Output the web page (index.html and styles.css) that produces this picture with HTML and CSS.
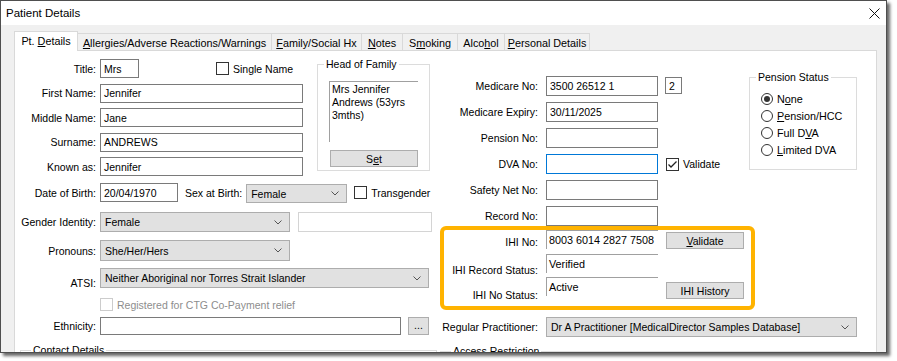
FILE: index.html
```html
<!DOCTYPE html>
<html>
<head>
<meta charset="utf-8">
<title>Patient Details</title>
<link rel="stylesheet" href="styles.css">
</head>
<body>
<div class="window">
  <div class="titlebar">
    <span class="title">Patient Details</span>
    <svg class="close" width="11" height="11" viewBox="0 0 11 11"><path d="M0.5 0.5 L10.5 10.5 M10.5 0.5 L0.5 10.5" stroke="#111" stroke-width="1" fill="none"/></svg>
  </div>
  <div class="client">
    <div class="tabs">
      <div class="tab active t-pt"><span>Pt. <u>D</u>etails</span></div>
      <div class="tab t-all"><span><u>A</u>llergies/Adverse Reactions/Warnings</span></div>
      <div class="tab t-fam"><span><u>F</u>amily/Social Hx</span></div>
      <div class="tab t-notes"><span><u>N</u>otes</span></div>
      <div class="tab t-smk"><span>S<u>m</u>oking</span></div>
      <div class="tab t-alc"><span>Alco<u>h</u>ol</span></div>
      <div class="tab t-per"><span><u>P</u>ersonal Details</span></div>
    </div>
    <div class="panel">
      <div class="col-left">
        <div class="upper-left">
          <div class="names">
            <div class="frow h19"><span class="lbl">Title:</span><div class="inp w39">Mrs</div><span class="cb ml77"></span><span class="cbl">Single Name</span></div>
            <div class="frow h19"><span class="lbl">First Name:</span><div class="inp w203">Jennifer</div></div>
            <div class="frow h19"><span class="lbl">Middle Name:</span><div class="inp w203">Jane</div></div>
            <div class="frow h19"><span class="lbl">Surname:</span><div class="inp w203">ANDREWS</div></div>
            <div class="frow h19"><span class="lbl">Known as:</span><div class="inp w203">Jennifer</div></div>
          </div>
          <fieldset class="grp hof">
            <legend class="cap">Head of Family</legend>
            <div class="hof-box">Mrs Jennifer<br>Andrews (53yrs<br>3mths)</div>
            <div class="btn set"><span>S<u>e</u>t</span></div>
          </fieldset>
        </div>

        <div class="frow h19 r-dob">
          <span class="lbl">Date of Birth:</span><div class="inp w78">20/04/1970</div>
          <span class="sexlbl">Sex at Birth:</span>
          <div class="sel w101">Female<svg class="chev" width="8" height="5" viewBox="0 0 8 5"><polyline points="0.5,0.5 4,4 7.5,0.5" fill="none" stroke="#555" stroke-width="1"/></svg></div>
          <span class="cb ml7"></span><span class="cbl">Transgender</span>
        </div>

        <div class="frow h20 r-gen">
          <span class="lbl">Gender Identity:</span>
          <div class="sel w190">Female<svg class="chev" width="8" height="5" viewBox="0 0 8 5"><polyline points="0.5,0.5 4,4 7.5,0.5" fill="none" stroke="#555" stroke-width="1"/></svg></div>
          <div class="inp dis w134"></div>
        </div>

        <div class="frow h21 r-pro">
          <span class="lbl">Pronouns:</span>
          <div class="sel w190">She/Her/Hers<svg class="chev" width="8" height="5" viewBox="0 0 8 5"><polyline points="0.5,0.5 4,4 7.5,0.5" fill="none" stroke="#555" stroke-width="1"/></svg></div>
        </div>

        <div class="frow h20 r-atsi">
          <span class="lbl low">ATSI:</span>
          <div class="sel w329">Neither Aboriginal nor Torres Strait Islander<svg class="chev" width="8" height="5" viewBox="0 0 8 5"><polyline points="0.5,0.5 4,4 7.5,0.5" fill="none" stroke="#555" stroke-width="1"/></svg></div>
        </div>

        <div class="frow h13 r-ctg">
          <span class="lbl"></span><span class="cb cb-dis"></span><span class="cbl dis-text">Registered for CTG Co-Payment relief</span>
        </div>

        <div class="frow h18 r-eth">
          <span class="lbl">Ethnicity:</span><div class="inp w301"></div><div class="btn dots">...</div>
        </div>

        <fieldset class="grp contact">
          <legend class="cap">Contact Details</legend>
          <div class="grp-fill"></div>
        </fieldset>
      </div>

      <div class="col-right">
        <div class="upper-right">
          <div class="mrows">
            <div class="frow h20"><span class="rlbl">Medicare No:</span><div class="inp w112">3500 26512 1</div><div class="inp irn">2</div></div>
            <div class="frow h20"><span class="rlbl">Medicare Expiry:</span><div class="inp w112">30/11/2025</div></div>
            <div class="frow h20"><span class="rlbl">Pension No:</span><div class="inp w112"></div></div>
            <div class="frow h20"><span class="rlbl">DVA No:</span><div class="inp w112 focus"></div><span class="cb ml8 checked"><svg width="11" height="11" viewBox="0 0 11 11"><polyline points="1.5,5.5 4,8 9.5,2.5" fill="none" stroke="#222" stroke-width="1.3"/></svg></span><span class="cbl">Validate</span></div>
            <div class="frow h20"><span class="rlbl">Safety Net No:</span><div class="inp w112"></div></div>
            <div class="frow h20"><span class="rlbl">Record No:</span><div class="inp w112"></div></div>
          </div>
          <fieldset class="grp pension">
            <legend class="cap">Pension Status</legend>
            <div class="radios">
              <div class="rrow"><span class="rb on"><span class="dot"></span></span><span class="rl">N<u>o</u>ne</span></div>
              <div class="rrow"><span class="rb"></span><span class="rl"><u>P</u>ension/HCC</span></div>
              <div class="rrow"><span class="rb"></span><span class="rl">Full D<u>V</u>A</span></div>
              <div class="rrow"><span class="rb"></span><span class="rl"><u>L</u>imited DVA</span></div>
            </div>
          </fieldset>
        </div>

        <div class="ihi">
          <span class="ilbl l1">IHI No:</span>
          <div class="ro">8003 6014 2827 7508</div>
          <div class="btn ib1"><span><u>V</u>alidate</span></div>
          <span class="ilbl l2">IHI Record Status:</span>
          <div class="ro">Verified</div>
          <span></span>
          <span class="ilbl l3">IHI No Status:</span>
          <div class="ro">Active</div>
          <div class="btn ib3"><span>IHI History</span></div>
        </div>

        <div class="frow h20 r-prac">
          <span class="rlbl">Regular Practitioner:</span>
          <div class="sel w311">Dr A Practitioner [MedicalDirector Samples Database]<svg class="chev" width="8" height="5" viewBox="0 0 8 5"><polyline points="0.5,0.5 4,4 7.5,0.5" fill="none" stroke="#555" stroke-width="1"/></svg></div>
        </div>

        <fieldset class="grp access">
          <legend class="cap">Access Restriction</legend>
          <div class="grp-fill"></div>
        </fieldset>
      </div>
    </div>
  </div>
</div>
</body>
</html>
```
FILE: styles.css
```css
* { box-sizing: border-box; }
html, body { margin: 0; padding: 0; background: #ffffff; }
body {
  font-family: "Liberation Sans", Arial, sans-serif;
  font-size: 10.5px;
  color: #000;
  width: 897px;
  height: 361px;
  overflow: hidden;
}
u { text-decoration: underline; text-underline-offset: 1px; }

.window {
  width: 887px;
  height: 353px;
  border: 1px solid #4f4f4f;
  background: #f0f0f0;
  overflow: hidden;
  box-shadow: 3px 3px 3px rgba(0, 0, 0, 0.6);
}

.titlebar {
  height: 24px;
  background: #fff;
  display: flex;
  align-items: center;
  justify-content: space-between;
  padding: 0 6px 0 5px;
}
.title { font-size: 11.5px; }
.close { display: block; margin-top: 1px; }

.client {
  padding: 6px 0 0 13px;
}

.tabs {
  display: flex;
  align-items: flex-end;
  height: 19px;
}
.tab {
  height: 17px;
  border: 1px solid #d9d9d9;
  border-left: none;
  border-bottom: none;
  background: #f0f0f0;
  display: flex;
  align-items: center;
  justify-content: center;
  white-space: nowrap;
  font-size: 10.8px;
  padding-top: 1px;
}
.tab.active {
  height: 20px;
  border-left: 1px solid #d9d9d9;
  background: #fff;
  margin-bottom: -1px;
  position: relative;
  z-index: 1;
  padding-top: 0;
  padding-bottom: 1px;
}
.t-pt { width: 64px; }
.t-all { width: 194px; }
.t-fam { width: 90px; }
.t-notes { width: 41px; }
.t-smk { width: 55px; }
.t-alc { width: 47px; }
.t-per { width: 85px; }

.panel {
  width: 863px;
  height: 320px;
  background: #fff;
  border: 1px solid #d9d9d9;
  display: flex;
}

/* generic */
.frow { display: flex; align-items: center; }
.h13 { height: 13px; }
.h18 { height: 18px; }
.h19 { height: 19px; }
.h20 { height: 20px; }
.h21 { height: 21px; }

.lbl {
  width: 81px;
  margin-right: 4px;
  text-align: right;
  white-space: nowrap;
  flex-shrink: 0;
}
.lbl.low { align-self: flex-end; margin-bottom: -1px; }
.rlbl {
  width: 101px;
  margin-right: 8px;
  text-align: right;
  white-space: nowrap;
  flex-shrink: 0;
}

.inp {
  height: 100%;
  border: 1px solid #7a7a7a;
  background: #fff;
  padding-left: 3px;
  display: flex;
  align-items: center;
  white-space: nowrap;
  flex-shrink: 0;
}
.inp.focus { border-color: #0078d7; }
.inp.dis { border-color: #d4d4d4; margin-left: 8px; }
.irn { width: 17px; height: 17px; margin-left: 7px; align-self: flex-start; margin-top: 1px; padding-left: 3px; }

.w39 { width: 39px; }
.w78 { width: 78px; }
.w101 { width: 101px; }
.w112 { width: 112px; }
.w134 { width: 134px; }
.w190 { width: 190px; }
.w203 { width: 203px; }
.w301 { width: 301px; }
.w311 { width: 311px; }
.w329 { width: 329px; }

.sel {
  height: 100%;
  background: #e1e1e1;
  border: 1px solid #adadad;
  display: flex;
  align-items: center;
  justify-content: space-between;
  padding: 0 7px 0 4px;
  white-space: nowrap;
  flex-shrink: 0;
}
.chev { display: block; flex-shrink: 0; }

.cb {
  width: 13px;
  height: 13px;
  border: 1px solid #333;
  background: #fff;
  flex-shrink: 0;
  display: flex;
  align-items: center;
  justify-content: center;
}
.cb svg { display: block; }
.cb-dis { border-color: #cccccc; }
.cbl { margin-left: 4px; white-space: nowrap; }
.dis-text { color: #8d8d8d; }
.ml7 { margin-left: 7px; }
.ml8 { margin-left: 8px; }
.ml77 { margin-left: 77px; }

.btn {
  background: #e1e1e1;
  border: 1px solid #adadad;
  display: flex;
  align-items: center;
  justify-content: center;
  white-space: nowrap;
}

/* group boxes */
.grp {
  margin: 0;
  padding: 0;
  border: 1px solid #dcdcdc;
  min-width: 0;
}
.cap {
  padding: 0 2px;
  margin-left: 6px;
  line-height: 13px;
  white-space: nowrap;
}
.grp-fill { height: 40px; }

/* left column */
.col-left {
  width: 422px;
  flex-shrink: 0;
  padding-top: 8px;
}
.upper-left { display: flex; align-items: flex-start; }
.names {
  width: 288px;
  display: flex;
  flex-direction: column;
  gap: 5.5px;
}
.hof {
  width: 113px;
  height: 113px;
  margin-left: 14px;
  margin-top: -1px;
}
.hof-box {
  margin: 10px 0 0 11px;
  width: 89px;
  height: 61px;
  border-top: 1px solid #a0a0a0;
  border-left: 1px solid #a0a0a0;
  padding: 1px 2px;
  line-height: 13px;
}
.set {
  margin: 8px 0 0 12px;
  width: 88px;
  height: 17px;
}

.r-dob { margin-top: 7px; }
.sexlbl { margin-left: 7px; margin-right: 4px; white-space: nowrap; }
.r-dob .sel { height: 19px; margin-top: 2px; }
.r-gen { margin-top: 10px; }
.r-pro { margin-top: 8px; }
.r-atsi { margin-top: 7px; }
.r-ctg { margin-top: 10px; }
.r-eth { margin-top: 6px; }
.dots { width: 21px; height: 18px; margin-left: 7px; padding-bottom: 3px; }

.contact {
  margin: 9px 0 0 5px;
  width: 417px;
}
.contact .cap { margin-left: 10px; }

/* right column */
.col-right {
  flex: 1;
  padding-top: 25px;
}
.upper-right { display: flex; align-items: flex-start; }
.mrows {
  width: 312px;
  flex-shrink: 0;
  display: flex;
  flex-direction: column;
  gap: 6px;
}
.pension {
  width: 108px;
  height: 99px;
  margin-top: -5px;
}
.radios { padding-top: 6px; }
.rrow { height: 17px; display: flex; align-items: center; padding-left: 11px; }
.rb {
  width: 12px;
  height: 12px;
  border: 1px solid #333;
  border-radius: 50%;
  background: #fff;
  display: flex;
  align-items: center;
  justify-content: center;
  flex-shrink: 0;
}
.rb .dot { width: 6px; height: 6px; border-radius: 50%; background: #333; }
.rl { margin-left: 4px; white-space: nowrap; font-size: 10.8px; }

.ihi {
  margin-left: 3px;
  width: 315px;
  height: 84px;
  border: 4px solid #ffb300;
  border-radius: 6px;
  display: grid;
  grid-template-columns: 94px 112px 78px;
  grid-template-rows: 19px 19px 19px;
  column-gap: 8px;
  row-gap: 4.5px;
}
.ilbl { text-align: right; white-space: nowrap; align-self: end; }
.l1 { margin-bottom: 1px; }
.l2 { margin-bottom: -3px; }
.l3 { margin-bottom: -5px; }
.ro {
  border-top: 1px solid #a0a0a0;
  border-left: 1px solid #a0a0a0;
  padding-left: 2px;
  display: flex;
  align-items: center;
  white-space: nowrap;
  font-size: 10.8px;
}
.ib1 { height: 17px; margin-top: 2px; }
.ib3 { height: 17px; margin-top: 5px; }

.r-prac { margin-top: 7px; }
.access {
  margin: 8px 0 0 3px;
  width: 420px;
}
.access .cap { margin-left: 10px; }
```
